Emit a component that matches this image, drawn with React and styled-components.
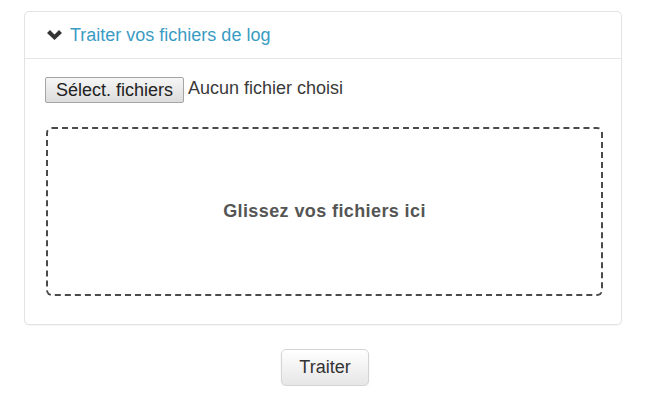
import React from 'react'
import styled, { createGlobalStyle } from 'styled-components'

const Global = createGlobalStyle`
body {
  margin: 0;
  background: #fff;
  font-family: "Liberation Sans", Arial, sans-serif;
  font-size: 18px;
  color: #333;
}
`

const Page = styled.div`
padding: 11px 28px 0 24px;
display: flex;
flex-direction: column;
`

const Panel = styled.div`
border: 1px solid #e3e3e3;
border-radius: 5px;
background: #fff;
box-shadow: 0 1px 1px rgba(0,0,0,0.04);
`

const Heading = styled.div`
display: flex;
align-items: center;
gap: 8px;
height: 46px;
padding: 0 10px 0 22px;
border-bottom: 1px solid #e6e6e6;
color: #3a9cc4;
font-size: 18px;
`

const Body = styled.div`
padding: 18px 18px 28px 20px;
`

const FileRow = styled.div`
display: flex;
align-items: center;
gap: 4px;
`

const FileButton = styled.button`
font-family: "Liberation Sans", Arial, sans-serif;
font-size: 18px;
color: #222;
height: 26px;
padding: 0 10px;
background: linear-gradient(#f6f6f6, #dcdcdc);
border: 1px solid #a5a5a5;
border-radius: 2px;
`

const FileLabel = styled.span`
font-size: 18px;
color: #3a3a3a;
margin-top: -4px;
`

const DropZone = styled.div`
margin-top: 24px;
margin-left: 1px;
height: 165px;
border: 2px dashed #4a4a4a;
border-radius: 6px;
display: flex;
align-items: center;
justify-content: center;
font-weight: bold;
font-size: 18px;
letter-spacing: 0.4px;
color: #555;
`

const Actions = styled.div`
display: flex;
justify-content: center;
padding-top: 24px;
margin-left: 4px;
`

const Button = styled.button`
font-family: "Liberation Sans", Arial, sans-serif;
font-size: 18px;
color: #333;
height: 37px;
padding: 0 17px;
background: linear-gradient(#fff, #e6e6e6);
border: 1px solid #d4d4d4;
border-radius: 5px;
box-shadow: 0 1px 2px rgba(0,0,0,0.08);
`

const Chevron = () => (
  <svg width="15" height="10" viewBox="0 0 15 10">
    <polygon points="0,3 3,0 7.5,4.4 12,0 15,3 7.5,10" fill="#333" />
  </svg>
)

const App = () => {
  return (
    <>
      <Global />
      <Page>
        <Panel>
          <Heading>
            <Chevron />
            <span>Traiter vos fichiers de log</span>
          </Heading>
          <Body>
            <FileRow>
              <FileButton>Sélect. fichiers</FileButton>
              <FileLabel>Aucun fichier choisi</FileLabel>
            </FileRow>
            <DropZone>Glissez vos fichiers ici</DropZone>
          </Body>
        </Panel>
        <Actions>
          <Button>Traiter</Button>
        </Actions>
      </Page>
    </>
  )
}

export default App
